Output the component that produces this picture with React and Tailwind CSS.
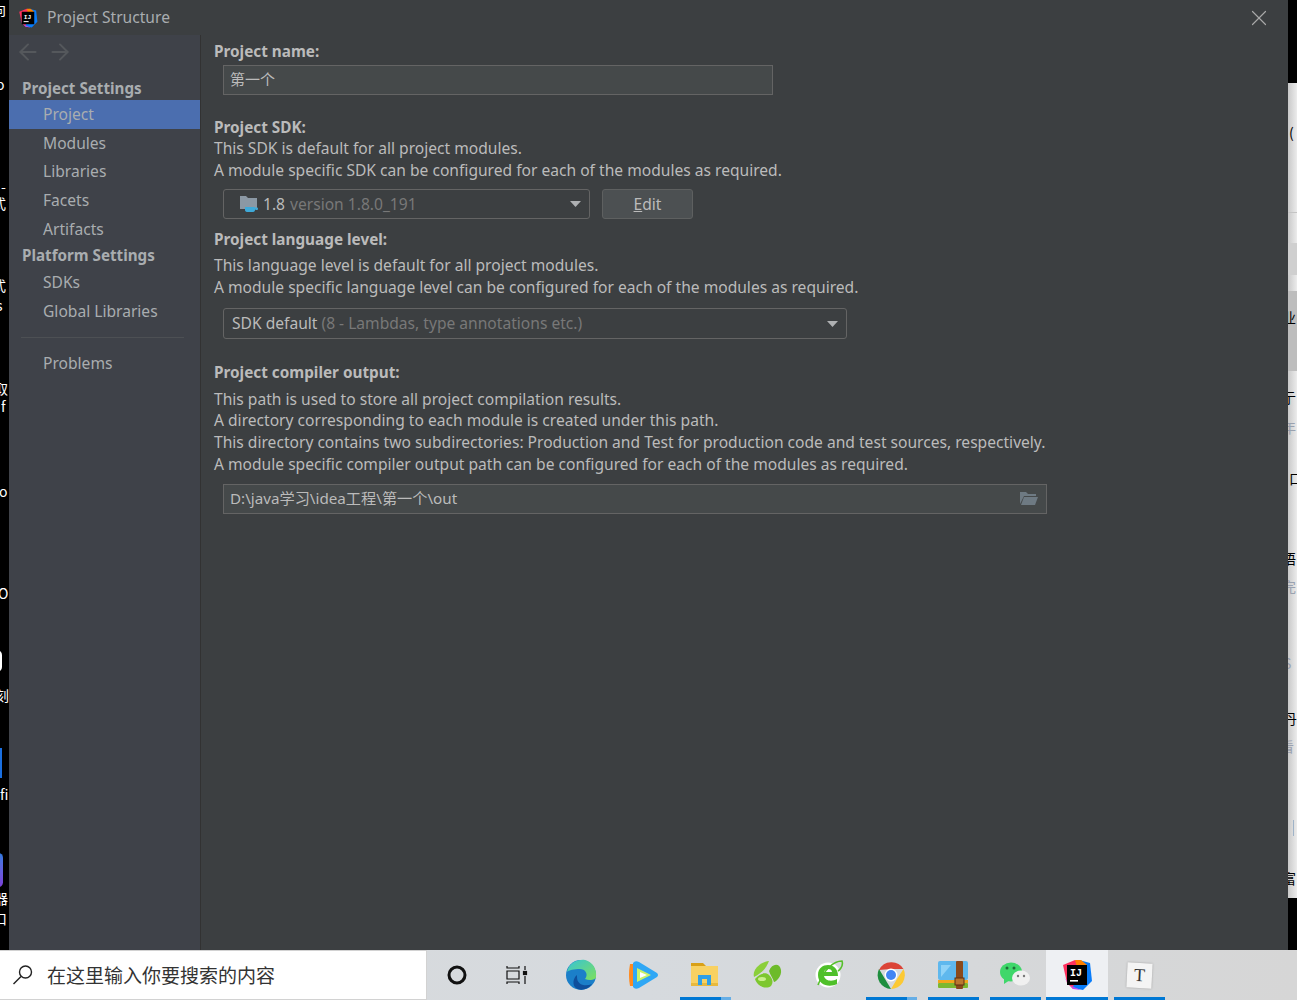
import React from 'react';
import { ArrowLeft, ArrowRight, X } from 'lucide-react';

const uiFont = { fontFamily: '"Noto Sans", "Noto Sans CJK SC", sans-serif' };

// bits of the window behind the dialog that stick out on both sides
const leftBits = [
  ['向', 1, -8], ['o', 76, -4], ['-', 178, 1], ['式', 195, -8], ['式', 277, -8], ['s', 297, -4],
  ['取', 380, -6], ['f', 398, 1], ['o', 483, -1], ['O', 585, -2], ['刻', 687, -5], ['fi', 786, 0],
  ['器', 890, -6], ['口', 910, -7],
];
const rightBits = [
  ['(', 124, 1, 'text-black'], ['业', 309, -6, 'text-black'], ['亍', 389, -6, 'text-black'], ['年', 419, -6, 'text-gray-400'],
  ['口', 470, 1, 'text-black'], ['语', 550, -6, 'text-black'], ['完', 578, -6, 'text-gray-400'], ['S', 655, -5, 'text-gray-400'],
  ['丹', 710, -5, 'text-black'], ['看', 738, -8, 'text-gray-400'], ['富', 870, -6, 'text-black'],
];

const IdeaLogo = ({ size = 20 }) => (
  <svg width={size} height={size} viewBox="0 0 32 32">
    <path d="M2 6 L14 1 L20 6 L12 30 L6 24 Z" fill="#fe315d" />
    <path d="M18 1 L29 4 L31 22 L22 31 L12 29 Z" fill="#087cfa" />
    <path d="M3 18 L12 30 L20 31 L8 26 Z" fill="#b74af7" />
    <path d="M14 1 L20 1 L26 6 L16 8 Z" fill="#ff8100" />
    <rect x="6" y="6" width="20" height="20" fill="#000" />
    <rect x="9" y="21" width="8" height="1.6" fill="#fff" />
    <text x="9" y="17" fontSize="10" fontWeight="700" fill="#fff" fontFamily="Liberation Mono, monospace">IJ</text>
  </svg>
);

const SdkIcon = () => (
  <svg width="20" height="20" viewBox="0 0 20 20" className="shrink-0">
    <path d="M1 2 H7 L9 4 H18 V15 H1 Z" fill="#8b98a4" />
    <path d="M6 13 H16 V16 Q16 18 13 18 H9 Q6 18 6 16 Z" fill="#3fa9d8" />
    <rect x="16" y="13.5" width="3" height="2.5" rx="1" fill="#3fa9d8" />
  </svg>
);

const FolderOpenIcon = () => (
  <svg width="20" height="18" viewBox="0 0 20 18">
    <path d="M1 2 H7 L9 4 H17 V6 H5 L1 14 Z" fill="#6e7a83" />
    <path d="M5 7 H19 L16 15 H2 Z" fill="#6e7a83" />
  </svg>
);

const CaretDown = () => (
  <svg width="11" height="6" viewBox="0 0 11 6"><path d="M0 0 H11 L5.5 6 Z" fill="#aeb0b2" /></svg>
);

const SideItem = ({ label, active }) => (
  <div className={`h-[28.6px] pl-[34px] flex items-center ${active ? 'bg-[#4b6eaf]' : ''}`}>{label}</div>
);

const SideHead = ({ label, className = '' }) => (
  <div className={`pl-[13px] font-bold text-[15.2px] ${className}`}>{label}</div>
);

const Sidebar = () => (
  <div className="w-[192px] shrink-0 bg-[#3f4249] border-r border-[#323232] text-[15.6px] text-[#a9adb0] leading-5">
    <div className="flex items-center gap-[6px] h-[33px] pl-[6px] text-[#55585c]">
      <ArrowLeft size={26} strokeWidth={1.8} />
      <ArrowRight size={26} strokeWidth={1.8} />
    </div>
    <SideHead label="Project Settings" className="mt-[10px] mb-[2px]" />
    <SideItem label="Project" active />
    <SideItem label="Modules" />
    <SideItem label="Libraries" />
    <SideItem label="Facets" />
    <SideItem label="Artifacts" />
    <SideHead label="Platform Settings" className="mt-[2px] mb-[3px]" />
    <SideItem label="SDKs" />
    <SideItem label="Global Libraries" />
    <div className="h-px bg-[#4d5054] ml-[12px] mr-[16px] mt-[12px] mb-[11px]" />
    <SideItem label="Problems" />
  </div>
);

const FieldLabel = ({ children, className = '' }) => (
  <div className={`font-bold text-[15.3px] ${className}`}>{children}</div>
);

const Content = () => (
  <div className="flex-1 pl-[13px] text-[15.6px] text-[#bbbbbb] leading-[21.6px]">
    <FieldLabel className="mt-[6px]">Project name:</FieldLabel>
    <div className="ml-[9px] mt-[2px] w-[550px] h-[30px] bg-[#45494a] border border-[#646464] flex items-center pl-[6px] text-[15px]">第一个</div>

    <FieldLabel className="mt-[22px]">Project SDK:</FieldLabel>
    <div>This SDK is default for all project modules.</div>
    <div>A module specific SDK can be configured for each of the modules as required.</div>
    <div className="ml-[9px] mt-[8px] flex gap-[12px]">
      <div className="w-[367px] h-[30px] border border-[#646464] rounded-[3px] flex items-center pl-[15px] pr-[8px]">
        <SdkIcon />
        <span className="ml-[4px]">1.8</span>
        <span className="ml-[5px] text-[#787878]">version 1.8.0_191</span>
        <span className="ml-auto"><CaretDown /></span>
      </div>
      <div className="w-[91px] h-[30px] bg-[#4c5052] border border-[#5e6060] rounded-[3px] flex items-center justify-center"><span><span className="underline">E</span>dit</span></div>
    </div>

    <FieldLabel className="mt-[10px]">Project language level:</FieldLabel>
    <div className="mt-[4px]">This language level is default for all project modules.</div>
    <div>A module specific language level can be configured for each of the modules as required.</div>
    <div className="ml-[9px] mt-[10px] w-[624px] h-[31px] border border-[#646464] rounded-[3px] flex items-center pl-[8px] pr-[8px]">
      <span>SDK default</span>
      <span className="ml-[4px] text-[#787878]">(8 - Lambdas, type annotations etc.)</span>
      <span className="ml-auto"><CaretDown /></span>
    </div>

    <FieldLabel className="mt-[23px]">Project compiler output:</FieldLabel>
    <div className="mt-[5px]">This path is used to store all project compilation results.</div>
    <div>A directory corresponding to each module is created under this path.</div>
    <div>This directory contains two subdirectories: Production and Test for production code and test sources, respectively.</div>
    <div>A module specific compiler output path can be configured for each of the modules as required.</div>
    <div className="ml-[9px] mt-[9px] w-[824px] h-[30px] bg-[#45494a] border border-[#646464] flex items-center pl-[6px] pr-[7px] text-[15.2px]">
      <span>D:\java学习\idea工程\第一个\out</span>
      <span className="ml-auto"><FolderOpenIcon /></span>
    </div>
  </div>
);

const Dialog = () => (
  <div className="flex-1 flex flex-col bg-[#3c3f41] min-w-0">
    <div className="h-[35px] shrink-0 flex items-center pt-px pl-[9px] pr-[16px] text-[15.6px] text-[#a9adb0]">
      <IdeaLogo />
      <span className="ml-[9px]">Project Structure</span>
      <X size={26} strokeWidth={1.1} className="ml-auto text-[#a8a8a8]" />
    </div>
    <div className="flex-1 flex min-h-0">
      <Sidebar />
      <Content />
    </div>
  </div>
);

const Cell = ({ children, line, active }) => (
  <div className={`relative w-[62px] h-full shrink-0 flex items-center justify-center ${active ? 'bg-[#eef0f3]' : ''}`}>
    {children}
    {line === 'stack' && (
      <div className="absolute bottom-0 left-[6px] w-[51px] h-[3px] flex">
        <div className="w-[41px] bg-[#0078d4]" />
        <div className="flex-1 bg-[#66aee6]" />
      </div>
    )}
    {line === 'one' && <div className="absolute bottom-0 left-[6px] w-[51px] h-[3px] bg-[#0078d4]" />}
    {line === 'full' && <div className="absolute bottom-0 inset-x-0 h-[3px] bg-[#0078d4]" />}
  </div>
);

const Taskbar = () => (
  <div className="h-[50px] shrink-0 flex bg-gradient-to-r from-[#d8dadc] via-[#d6dade] to-[#d6d6d6]">
    <div className="w-[426px] shrink-0 h-full bg-white border-y border-[#d2d2d2] shadow-[1px_0_0_#d2d2d2] flex items-center pl-[12px] text-[#333]" style={{ fontFamily: '"Noto Sans CJK SC", sans-serif' }}>
      <svg width="22" height="22" viewBox="0 0 22 22" fill="none" stroke="#222" strokeWidth="1.4">
        <circle cx="13.5" cy="8" r="6" />
        <path d="M9 12.5 L1.5 20" />
      </svg>
      <span className="ml-[13px] text-[19px]">在这里输入你要搜索的内容</span>
    </div>
    <Cell>
      <svg width="22" height="22" viewBox="0 0 22 22" fill="none" stroke="#111" strokeWidth="3"><circle cx="11" cy="11" r="8" /></svg>
    </Cell>
    <Cell>
      <svg width="22" height="20" viewBox="0 0 22 20" fill="none" stroke="#111" strokeWidth="1.2" className="-translate-x-[2px]">
        <path d="M1 1 V3 H13 V1 M1 6 H13 V14 H1 Z M1 19 V17 H13 V19 M19 1 V5 M19 11 V19" />
        <rect x="17.5" y="6.5" width="3" height="3" fill="#111" />
      </svg>
    </Cell>
    <Cell>
      <svg width="32" height="32" viewBox="0 0 32 32">
        <defs>
          <linearGradient id="edgeA" x1="0" y1="0" x2="1" y2="1"><stop offset="0" stopColor="#36c3d6" /><stop offset="1" stopColor="#7ee05d" /></linearGradient>
        </defs>
        <circle cx="16" cy="16" r="15" fill="#1b7fc9" />
        <path d="M2 13 C4 3 14 0 20 1 C28 3 32 10 31 18 C31 21 24 22 20 20 C24 15 20 10 15 10 C9 10 4 11 2 13 Z" fill="url(#edgeA)" />
        <path d="M12 18 C12 26 20 28 27 25 C23 31 15 32 11 29 C7 26 8 19 12 16 Z" fill="#0f4f9c" />
      </svg>
    </Cell>
    <Cell>
      <svg width="32" height="30" viewBox="0 0 32 30">
        <path d="M3 4 H8 V26 H3 Q1 15 3 4 Z" fill="#ff8a1e" />
        <path d="M6 3 Q8 0 12 2 L30 13 Q32 15 30 17 L12 28 Q8 30 6 27 Z" fill="#2fa7f5" />
        <path d="M10 8 L24 15 L10 22 Z" fill="#c8f26a" />
        <path d="M13 12 L20 15 L13 18 Z" fill="#fff" />
      </svg>
    </Cell>
    <Cell line="stack">
      <svg width="28" height="26" viewBox="0 0 28 26">
        <path d="M0 1 H12 L15 4 H0 Z" fill="#d9a017" />
        <rect x="0" y="4" width="27" height="20" fill="#f8d162" />
        <rect x="0" y="21" width="27" height="3" fill="#e8b93e" />
        <path d="M7 23 V13 H20 V23 H16 V17 H11 V23 Z" fill="#2f9fe8" />
      </svg>
    </Cell>
    <Cell>
      <svg width="30" height="30" viewBox="0 0 30 30">
        <path d="M2 17 C0 10 8 2 17 1 C15 6 12 12 2 17 Z" fill="#8bcf3a" />
        <path d="M17 11 C20 3 28 3 29 10 C30 16 24 22 22 22 C21 18 18 15 17 11 Z" fill="#6dbb2a" />
        <path d="M3 19 C8 13 14 12 17 15 C20 18 22 22 19 26 C14 30 5 26 3 19 Z" fill="#7dc72f" />
        <ellipse cx="10" cy="19" rx="4" ry="2" fill="#c9ef8c" />
      </svg>
    </Cell>
    <Cell>
      <svg width="30" height="32" viewBox="0 0 30 32">
        <circle cx="14" cy="16" r="12.5" fill="#fff" />
        <path d="M4 26 C10 10 20 2 28 2 C30 8 24 12 24 12" fill="none" stroke="#56c02b" strokeWidth="1.6" />
        <path d="M4 16 C4 9 9 6 14 6 C20 6 24 10 24 17 H10 C11 22 18 23 23 20 V25 C15 29 4 26 4 16 Z M10 13 H18 C18 9 11 9 10 13 Z" fill="#4fc02a" />
      </svg>
    </Cell>
    <Cell line="stack">
      <svg width="28" height="28" viewBox="-14 -14 28 28">
        <path d="M-12 -5 A14 14 0 0 1 12.5 -6 L0 -6 Z" fill="#db4437" />
        <path d="M12.5 -6 A14 14 0 0 1 0 14 L6 4 Z" fill="#fcc934" />
        <path d="M0 14 A14 14 0 0 1 -12 -6 L-6 4 Z" fill="#1e8e3e" />
        <circle cx="0" cy="0" r="6.4" fill="#fff" />
        <circle cx="0" cy="0" r="5" fill="#4285f4" />
      </svg>
    </Cell>
    <Cell line="one">
      <svg width="30" height="28" viewBox="0 0 30 28">
        <rect x="0" y="0" width="30" height="19" rx="2" fill="#5fb8ee" />
        <path d="M3 4 L13 4 L3 16 Z" fill="#8fd2f7" />
        <rect x="0" y="19" width="30" height="3" fill="#f2a71b" />
        <rect x="0" y="22" width="30" height="5" rx="1" fill="#7cb82f" />
        <rect x="18" y="0" width="7" height="28" rx="1" fill="#8a4a1c" />
        <rect x="17" y="17" width="9" height="7" fill="#b9772f" stroke="#5c2f10" />
      </svg>
    </Cell>
    <Cell line="one">
      <svg width="32" height="28" viewBox="0 0 32 28">
        <ellipse cx="12" cy="11" rx="11" ry="9.5" fill="#3fd76a" />
        <path d="M5 17 L5 23 L11 19 Z" fill="#3fd76a" />
        <circle cx="8" cy="7" r="1.5" fill="#1f6e3a" />
        <circle cx="15" cy="7" r="1.5" fill="#1f6e3a" />
        <ellipse cx="22" cy="17" rx="9" ry="7.5" fill="#f0f0f0" />
        <circle cx="19" cy="15" r="1.2" fill="#777" />
        <circle cx="25" cy="15" r="1.2" fill="#777" />
      </svg>
    </Cell>
    <Cell line="full" active>
      <IdeaLogo size={32} />
    </Cell>
    <Cell line="one">
      <div className="w-[25px] h-[25px] bg-[#f4f4f4] shadow-[0_0_2px_#999] rotate-[3deg] flex items-center justify-center text-[18px] text-[#333]" style={{ fontFamily: '"Liberation Serif", serif' }}>T</div>
    </Cell>
  </div>
);

export default function App() {
  return (
    <div className="w-[1297px] h-[1000px] flex flex-col overflow-hidden bg-black" style={uiFont}>
      <div className="flex-1 flex min-h-0">
        {/* window behind, left edge */}
        <div className="relative w-[9px] shrink-0 bg-black text-white text-[14px] leading-4 overflow-hidden" style={{ fontFamily: '"Noto Sans CJK SC", sans-serif' }}>
          {leftBits.map(([t, top, left]) => (
            <span key={top} className="absolute" style={{ top, left }}>{t}</span>
          ))}
          <div className="absolute top-[650px] -left-[8px] w-[10px] h-[22px] rounded-full border-2 border-white" />
          <div className="absolute top-[748px] left-0 w-[2px] h-[30px] bg-[#1a6fe0]" />
          <div className="absolute top-[853px] -left-[6px] w-[9px] h-[34px] rounded-full bg-gradient-to-b from-[#2b7ae0] to-[#7a3fd8]" />
        </div>
        <Dialog />
        {/* window behind, right edge */}
        <div className="relative w-[9px] shrink-0 bg-gradient-to-r from-[#c9c9c9] to-[#ececec] overflow-hidden text-[14px] leading-4" style={{ fontFamily: '"Noto Sans CJK SC", sans-serif' }}>
          <div className="absolute top-0 inset-x-0 h-[83px] bg-black" />
          <div className="absolute top-[212px] inset-x-0 h-px bg-[#c4c4c4]" />
          <div className="absolute top-[243px] inset-x-0 h-[32px] bg-[#cfcfcf]" />
          <div className="absolute top-[291px] inset-x-0 h-[80px] bg-[#bdbdbd]" />
          <div className="absolute top-[820px] left-[5px] w-px h-[16px] bg-[#9fb3c8]" />
          <div className="absolute top-[898px] inset-x-0 h-[52px] bg-black" />
          {rightBits.map(([t, top, left, cls]) => (
            <span key={top} className={`absolute ${cls}`} style={{ top, left }}>{t}</span>
          ))}
        </div>
      </div>
      <Taskbar />
    </div>
  );
}
